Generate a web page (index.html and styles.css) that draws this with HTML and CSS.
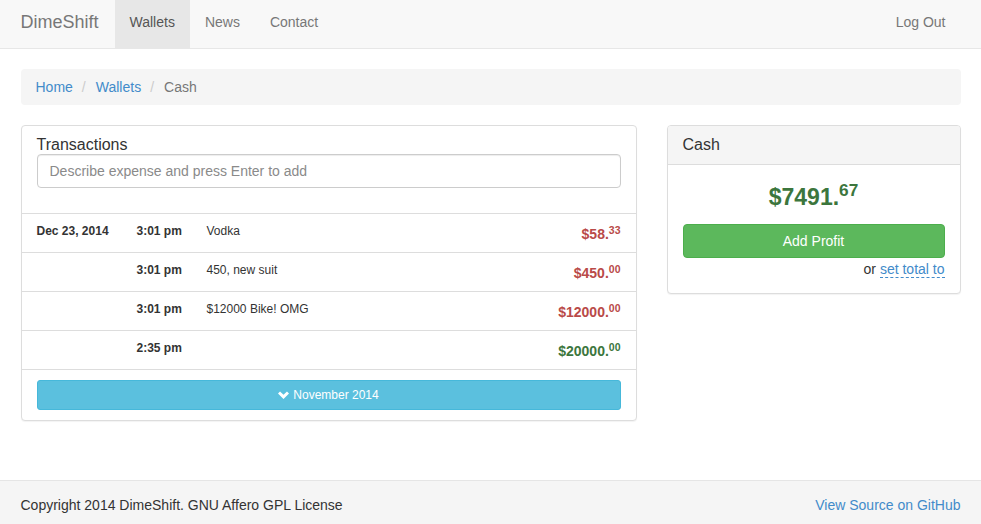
FILE: index.html
```html
<!DOCTYPE html>
<html>
<head>
<meta charset="utf-8">
<title>DimeShift</title>
<link rel="stylesheet" href="styles.css">
</head>
<body>
<div class="page">
  <nav class="navbar">
    <div class="container nav-inner">
      <a class="brand" href="#">DimeShift</a>
      <ul class="nav">
        <li class="active"><a href="#">Wallets</a></li>
        <li><a href="#">News</a></li>
        <li><a href="#">Contact</a></li>
      </ul>
      <ul class="nav nav-right">
        <li><a href="#">Log Out</a></li>
      </ul>
    </div>
  </nav>

  <main class="container main">
    <ol class="breadcrumb">
      <li><a href="#">Home</a></li>
      <li><a href="#">Wallets</a></li>
      <li class="current">Cash</li>
    </ol>

    <div class="columns">
      <section class="panel panel-left">
        <div class="panel-heading plain">
          <h3 class="panel-title">Transactions</h3>
          <input class="form-control" type="text" placeholder="Describe expense and press Enter to add">
        </div>
        <table class="tx">
          <tr>
            <td class="c-date">Dec 23, 2014</td>
            <td class="c-time">3:01 pm</td>
            <td class="c-desc">Vodka</td>
            <td class="c-amt neg">$58.<sup>33</sup></td>
          </tr>
          <tr>
            <td class="c-date"></td>
            <td class="c-time">3:01 pm</td>
            <td class="c-desc">450, new suit</td>
            <td class="c-amt neg">$450.<sup>00</sup></td>
          </tr>
          <tr>
            <td class="c-date"></td>
            <td class="c-time">3:01 pm</td>
            <td class="c-desc">$12000 Bike! OMG</td>
            <td class="c-amt neg">$12000.<sup>00</sup></td>
          </tr>
          <tr>
            <td class="c-date"></td>
            <td class="c-time">2:35 pm</td>
            <td class="c-desc"></td>
            <td class="c-amt pos">$20000.<sup>00</sup></td>
          </tr>
        </table>
        <div class="panel-foot">
          <button class="btn btn-info" type="button"><svg class="chev" viewBox="0 0 12 9" width="11" height="9"><path d="M0 2.2 L2.2 0 L6 3.8 L9.8 0 L12 2.2 L6 8.2 Z" fill="#fff"/></svg>November 2014</button>
        </div>
      </section>

      <aside class="panel panel-right">
        <div class="panel-heading grey">
          <h3 class="panel-title">Cash</h3>
        </div>
        <div class="panel-body">
          <div class="total">$7491.<sup>67</sup></div>
          <button class="btn btn-success" type="button">Add Profit</button>
          <div class="set-total">or <a href="#">set total to</a></div>
        </div>
      </aside>
    </div>
  </main>

  <footer class="footer">
    <div class="container foot-inner">
      <span>Copyright 2014 DimeShift. GNU Affero GPL License</span>
      <a href="#">View Source on GitHub</a>
    </div>
  </footer>
</div>
</body>
</html>
```

FILE: styles.css
```css
* { box-sizing: border-box; }
html, body { margin: 0; padding: 0; }
body {
  font-family: "Liberation Sans", Arial, sans-serif;
  font-size: 14px;
  line-height: 20px;
  color: #333;
  background: #fff;
}
a { color: #428bca; text-decoration: none; }

.page {
  min-height: 100vh;
  display: flex;
  flex-direction: column;
}
.container {
  width: 940px;
  margin: 0 auto;
}

/* navbar */
.navbar {
  background: #f8f8f8;
  border-bottom: 1px solid #e7e7e7;
  height: 49px;
}
.nav-inner {
  display: flex;
  align-items: stretch;
  height: 48px;
}
.brand {
  font-size: 18px;
  line-height: 20px;
  color: #777;
  padding: 12px 15px 16px 0;
  margin-right: 1px;
}
.nav {
  list-style: none;
  margin: 0;
  padding: 0;
  display: flex;
}
.nav a {
  display: block;
  padding: 12px 15px 16px;
  color: #777;
  line-height: 20px;
}
.nav .active a {
  background: #e7e7e7;
  color: #555;
}
.nav-right { margin-left: auto; }

/* main */
.main { flex: 1; padding-top: 20px; }
.breadcrumb {
  list-style: none;
  margin: 0 0 20px;
  padding: 8px 15px;
  background: #f5f5f5;
  border-radius: 4px;
  display: flex;
  height: 36px;
}
.breadcrumb li + li::before {
  content: "/";
  color: #ccc;
  padding: 0 10px 0 9px;
}
.breadcrumb .current { color: #777; }

.columns {
  display: flex;
  justify-content: space-between;
  align-items: flex-start;
}
.panel {
  border: 1px solid #ddd;
  border-radius: 4px;
  background: #fff;
  box-shadow: 0 1px 1px rgba(0,0,0,0.05);
}
.panel-left { width: 616px; }
.panel-right { width: 294px; }

.panel-heading.plain {
  padding: 10px 15px 25px;
  border-bottom: 1px solid #ddd;
}
.panel-heading.grey {
  background: #f5f5f5;
  border-bottom: 1px solid #ddd;
  padding: 9px 15px 9px;
  border-radius: 3px 3px 0 0;
}
.panel-title {
  margin: 0;
  font-size: 16px;
  font-weight: normal;
  line-height: 20px;
  color: #333;
}
.panel-heading.plain .panel-title { line-height: 18px; }
.form-control {
  display: block;
  width: 100%;
  height: 34px;
  padding: 6px 12px;
  font-family: inherit;
  font-size: 14px;
  color: #555;
  border: 1px solid #ccc;
  border-radius: 4px;
  box-shadow: inset 0 1px 1px rgba(0,0,0,0.075);
  outline: none;
}
.form-control::placeholder { color: #8a8a8a; }

.tx {
  width: 100%;
  border-collapse: separate;
  border-spacing: 0;
  font-size: 12px;
}
.tx td {
  padding: 8px 0 12px;
  vertical-align: top;
  border-bottom: 1px solid #ddd;
  line-height: 18px;
}
.tx .c-date { width: 115px; padding-left: 15px; font-weight: bold; }
.tx .c-time { width: 70px; font-weight: bold; }
.tx .c-amt {
  text-align: right;
  padding-right: 15px;
  font-size: 14px;
  font-weight: bold;
  padding-top: 11px;
  padding-bottom: 9px;
}
.neg { color: #b94a48; }
.pos { color: #3c763d; }
sup {
  font-size: 75%;
  line-height: 0;
  position: relative;
  vertical-align: baseline;
  top: -0.5em;
}

.panel-foot { padding: 10px 15px 10px; }
.btn {
  display: block;
  width: 100%;
  border: 1px solid transparent;
  border-radius: 3px;
  color: #fff;
  font-family: inherit;
  cursor: pointer;
}
.btn-info {
  background: #5bc0de;
  border-color: #46b8da;
  height: 30px;
  font-size: 12px;
  line-height: 16px;
  padding: 6px 10px;
}
.chev { vertical-align: -1px; margin-right: 4px; }
.btn-success {
  background: #5cb85c;
  border-color: #4cae4c;
  height: 34px;
  font-size: 14px;
  line-height: 20px;
  padding: 6px 12px;
  border-radius: 4px;
}

.panel-body { padding: 15px 15px 14px; }
.total {
  text-align: center;
  color: #3c763d;
  font-weight: bold;
  font-size: 23px;
  line-height: 29px;
  padding-top: 3px;
  margin-bottom: 12px;
}
.set-total {
  text-align: right;
  margin-top: 2px;
  line-height: 19px;
}
.set-total a { border-bottom: 1px dashed #428bca; }

/* footer */
.footer {
  background: #f5f5f5;
  border-top: 1px solid #e5e5e5;
  padding: 14px 0 9px;
  height: 44px;
}
.foot-inner {
  display: flex;
  justify-content: space-between;
}
```
